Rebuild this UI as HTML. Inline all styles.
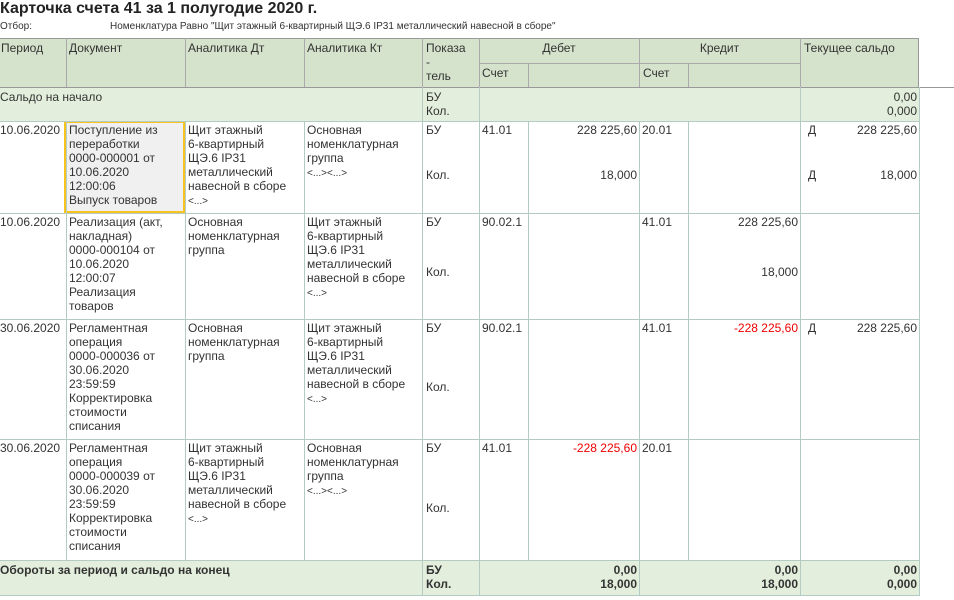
<!DOCTYPE html>
<html><head><meta charset="utf-8"><style>
body{margin:0;width:954px;height:600px;background:#fff;position:relative;overflow:hidden;font-family:"Liberation Sans",Arial,sans-serif;font-size:12px;color:#333}
div{position:absolute}
.t{line-height:14px;white-space:nowrap}
.r{text-align:right}
.v{width:1px;background:#b3cbc2}
.h{height:1px;background:#b3cbc2}
.b{font-weight:bold}
.red{color:#e00}
</style></head><body>
<div class="t b" style="left:0;top:0;font-size:16px;line-height:18px;color:#222">Карточка счета 41 за 1 полугодие 2020 г.</div>
<div class="t" style="left:0;top:20px;font-size:10px">Отбор:</div>
<div class="t" style="left:110px;top:20px;font-size:10px">Номенклатура Равно "Щит этажный 6-квартирный ЩЭ.6 IP31 металлический навесной в сборе"</div>

<!-- backgrounds -->
<div style="left:0;top:38px;width:919px;height:49px;background:#d6e3cc"></div>
<div style="left:0;top:87px;width:919px;height:34px;background:#e3efdc"></div>
<div style="left:0;top:560px;width:919px;height:35px;background:#e3efdc"></div>
<div style="left:64px;top:121px;width:117px;height:88px;background:#f0f0f0;border:2px solid #f7c31e"></div>

<!-- header border -->
<div style="left:0;top:38px;width:919px;height:48px;border-top:1px solid #999;border-right:1px solid #999;border-bottom:1px solid #999;box-sizing:border-box;height:50px"></div>
<div class="h" style="left:919px;top:87px;width:35px;background:#999"></div>

<!-- vertical lines header -->
<div class="v" style="left:66px;top:38px;height:49px;background:#aaa"></div>
<div class="v" style="left:185px;top:38px;height:49px;background:#aaa"></div>
<div class="v" style="left:304px;top:38px;height:49px;background:#aaa"></div>
<div class="v" style="left:422px;top:38px;height:49px;background:#aaa"></div>
<div class="v" style="left:479px;top:38px;height:49px;background:#aaa"></div>
<div class="v" style="left:639px;top:38px;height:49px;background:#aaa"></div>
<div class="v" style="left:800px;top:38px;height:49px;background:#aaa"></div>
<div class="v" style="left:528px;top:63px;height:24px;background:#aaa"></div>
<div class="v" style="left:688px;top:63px;height:24px;background:#aaa"></div>
<div class="h" style="left:479px;top:63px;width:321px;background:#aaa"></div>

<!-- saldo row lines -->
<div class="v" style="left:422px;top:87px;height:34px"></div>
<div class="v" style="left:479px;top:87px;height:34px"></div>
<div class="v" style="left:800px;top:87px;height:34px"></div>
<div class="v" style="left:919px;top:87px;height:508px"></div>

<!-- body vertical lines -->
<div class="v" style="left:66px;top:121px;height:439px"></div>
<div class="v" style="left:185px;top:121px;height:439px"></div>
<div class="v" style="left:304px;top:121px;height:439px"></div>
<div class="v" style="left:422px;top:121px;height:474px"></div>
<div class="v" style="left:479px;top:121px;height:474px"></div>
<div class="v" style="left:528px;top:121px;height:439px"></div>
<div class="v" style="left:639px;top:121px;height:474px"></div>
<div class="v" style="left:688px;top:121px;height:439px"></div>
<div class="v" style="left:800px;top:121px;height:474px"></div>

<!-- horizontal -->
<div class="h" style="left:0;top:121px;width:920px"></div>
<div class="h" style="left:0;top:213px;width:920px"></div>
<div class="h" style="left:0;top:319px;width:920px"></div>
<div class="h" style="left:0;top:439px;width:920px"></div>
<div class="h" style="left:0;top:560px;width:920px"></div>
<div class="h" style="left:0;top:595px;width:920px"></div>

<!-- header text -->
<div class="t" style="left:1px;top:41px">Период</div>
<div class="t" style="left:69px;top:41px">Документ</div>
<div class="t" style="left:188px;top:41px">Аналитика Дт</div>
<div class="t" style="left:307px;top:41px">Аналитика Кт</div>
<div class="t" style="left:426px;top:41px">Показа<br>-<br>тель</div>
<div class="t" style="left:479px;top:41px;width:160px;text-align:center">Дебет</div>
<div class="t" style="left:639px;top:41px;width:161px;text-align:center">Кредит</div>
<div class="t" style="left:804px;top:41px">Текущее сальдо</div>
<div class="t" style="left:482px;top:66px">Счет</div>
<div class="t" style="left:643px;top:66px">Счет</div>

<!-- saldo -->
<div class="t" style="left:0;top:90px">Сальдо на начало</div>
<div class="t" style="left:426px;top:90px">БУ<br>Кол.</div>
<div class="t r" style="left:800px;top:90px;width:117px">0,00<br>0,000</div>

<!-- row1 -->
<div class="t" style="left:0;top:123px">10.06.2020</div>
<div class="t" style="left:69px;top:123px">Поступление из<br>переработки<br>0000-000001 от<br>10.06.2020<br>12:00:06<br>Выпуск товаров</div>
<div class="t" style="left:188px;top:123px">Щит этажный<br>6-квартирный<br>ЩЭ.6 IP31<br>металлический<br>навесной в сборе<br><span style="font-size:10px">&lt;...&gt;</span></div>
<div class="t" style="left:307px;top:123px">Основная<br>номенклатурная<br>группа<br><span style="font-size:10px">&lt;...&gt;&lt;...&gt;</span></div>
<div class="t" style="left:426px;top:123px">БУ</div>
<div class="t" style="left:426px;top:168px">Кол.</div>
<div class="t" style="left:482px;top:123px">41.01</div>
<div class="t r" style="left:528px;top:123px;width:109px">228 225,60</div>
<div class="t r" style="left:528px;top:168px;width:109px">18,000</div>
<div class="t" style="left:642px;top:123px">20.01</div>
<div class="t" style="left:808px;top:123px">Д</div>
<div class="t r" style="left:820px;top:123px;width:97px">228 225,60</div>
<div class="t" style="left:808px;top:168px">Д</div>
<div class="t r" style="left:820px;top:168px;width:97px">18,000</div>

<!-- row2 -->
<div class="t" style="left:0;top:215px">10.06.2020</div>
<div class="t" style="left:69px;top:215px">Реализация (акт,<br>накладная)<br>0000-000104 от<br>10.06.2020<br>12:00:07<br>Реализация<br>товаров</div>
<div class="t" style="left:188px;top:215px">Основная<br>номенклатурная<br>группа</div>
<div class="t" style="left:307px;top:215px">Щит этажный<br>6-квартирный<br>ЩЭ.6 IP31<br>металлический<br>навесной в сборе<br><span style="font-size:10px">&lt;...&gt;</span></div>
<div class="t" style="left:426px;top:215px">БУ</div>
<div class="t" style="left:426px;top:265px">Кол.</div>
<div class="t" style="left:482px;top:215px">90.02.1</div>
<div class="t" style="left:642px;top:215px">41.01</div>
<div class="t r" style="left:688px;top:215px;width:110px">228 225,60</div>
<div class="t r" style="left:688px;top:265px;width:110px">18,000</div>

<!-- row3 -->
<div class="t" style="left:0;top:321px">30.06.2020</div>
<div class="t" style="left:69px;top:321px">Регламентная<br>операция<br>0000-000036 от<br>30.06.2020<br>23:59:59<br>Корректировка<br>стоимости<br>списания</div>
<div class="t" style="left:188px;top:321px">Основная<br>номенклатурная<br>группа</div>
<div class="t" style="left:307px;top:321px">Щит этажный<br>6-квартирный<br>ЩЭ.6 IP31<br>металлический<br>навесной в сборе<br><span style="font-size:10px">&lt;...&gt;</span></div>
<div class="t" style="left:426px;top:321px">БУ</div>
<div class="t" style="left:426px;top:380px">Кол.</div>
<div class="t" style="left:482px;top:321px">90.02.1</div>
<div class="t" style="left:642px;top:321px">41.01</div>
<div class="t r red" style="left:688px;top:321px;width:110px">-228 225,60</div>
<div class="t" style="left:808px;top:321px">Д</div>
<div class="t r" style="left:820px;top:321px;width:97px">228 225,60</div>

<!-- row4 -->
<div class="t" style="left:0;top:441px">30.06.2020</div>
<div class="t" style="left:69px;top:441px">Регламентная<br>операция<br>0000-000039 от<br>30.06.2020<br>23:59:59<br>Корректировка<br>стоимости<br>списания</div>
<div class="t" style="left:188px;top:441px">Щит этажный<br>6-квартирный<br>ЩЭ.6 IP31<br>металлический<br>навесной в сборе<br><span style="font-size:10px">&lt;...&gt;</span></div>
<div class="t" style="left:307px;top:441px">Основная<br>номенклатурная<br>группа<br><span style="font-size:10px">&lt;...&gt;&lt;...&gt;</span></div>
<div class="t" style="left:426px;top:441px">БУ</div>
<div class="t" style="left:426px;top:501px">Кол.</div>
<div class="t" style="left:482px;top:441px">41.01</div>
<div class="t r red" style="left:528px;top:441px;width:109px">-228 225,60</div>
<div class="t" style="left:642px;top:441px">20.01</div>

<!-- footer -->
<div class="t b" style="left:0;top:563px">Обороты за период и сальдо на конец</div>
<div class="t b" style="left:426px;top:563px">БУ<br>Кол.</div>
<div class="t b r" style="left:479px;top:563px;width:158px">0,00<br>18,000</div>
<div class="t b r" style="left:639px;top:563px;width:159px">0,00<br>18,000</div>
<div class="t b r" style="left:800px;top:563px;width:117px">0,00<br>0,000</div>
</body></html>
